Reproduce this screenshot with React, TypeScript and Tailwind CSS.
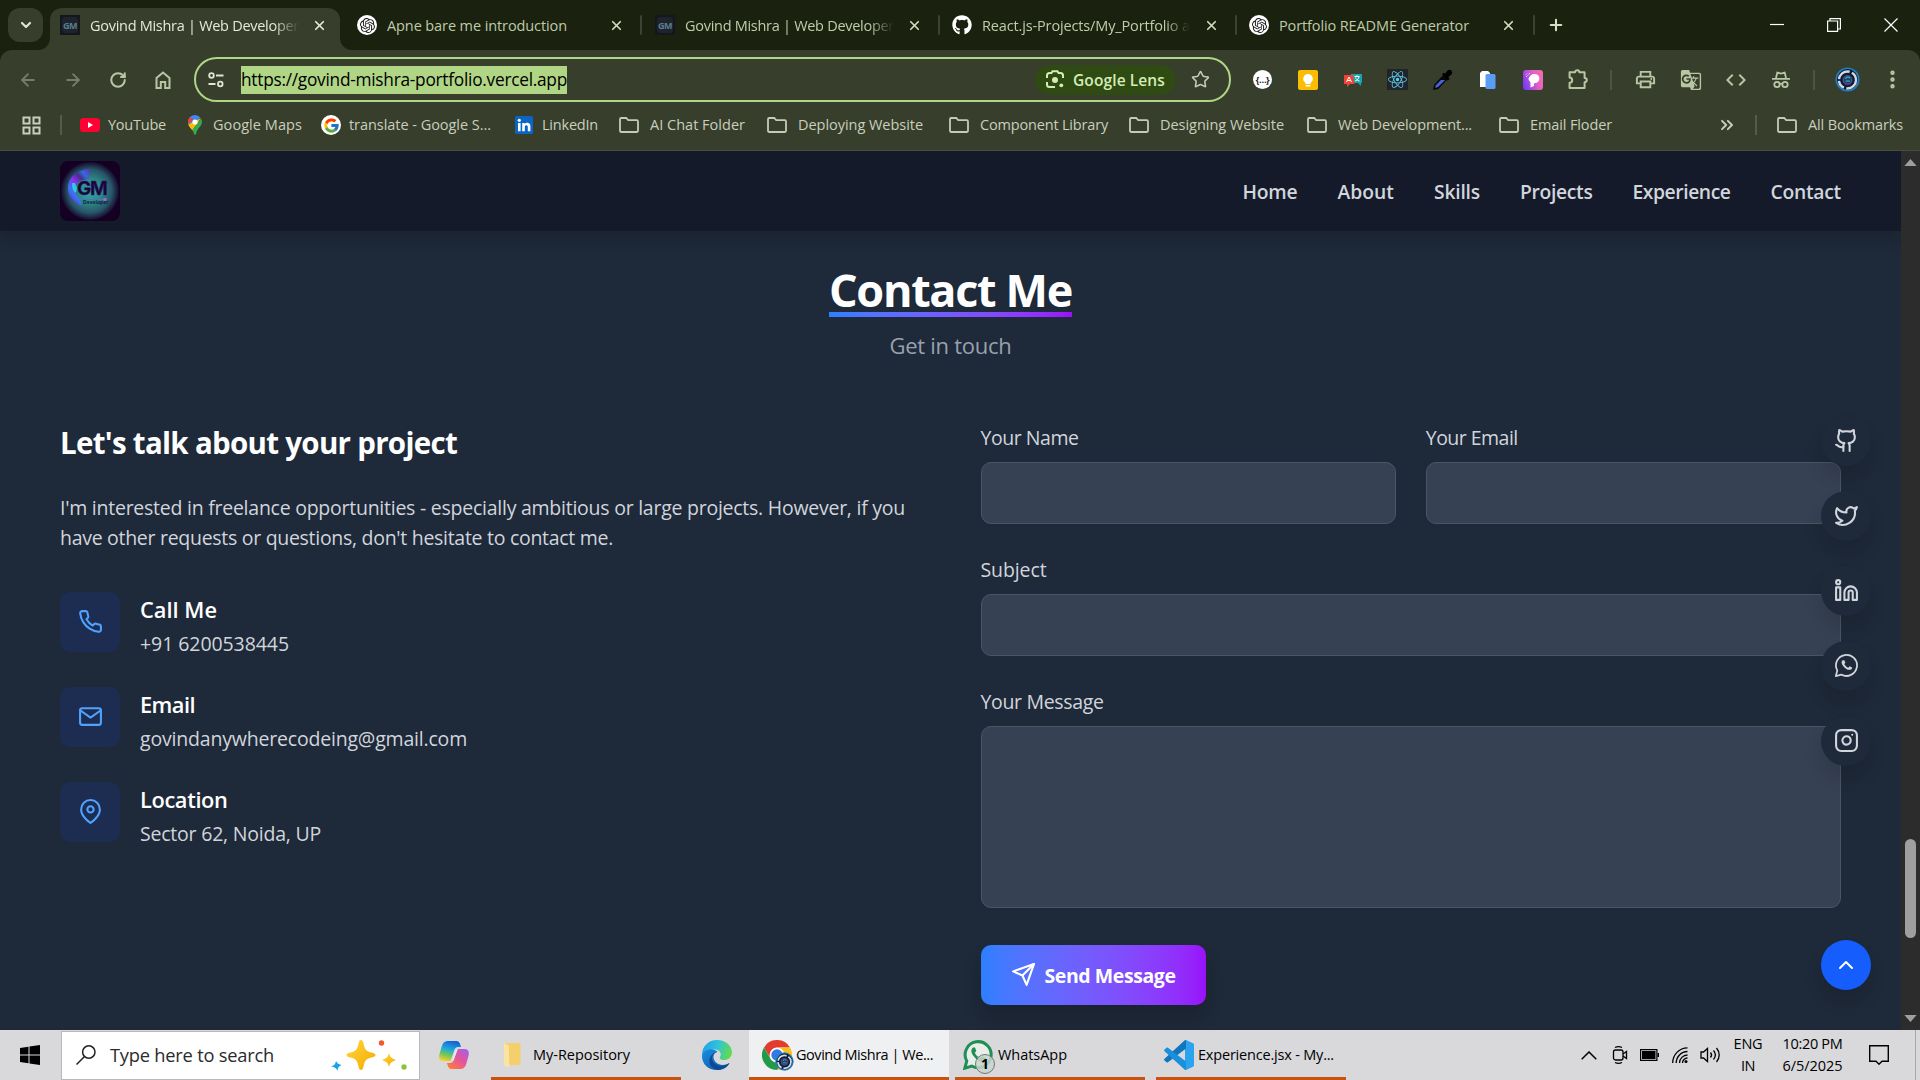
import { useLayoutEffect, useRef, type ReactNode } from 'react';
import {
  ArrowLeft, ArrowRight, RotateCw, Star, ChevronUp, ChevronDown, ChevronsRight, X, Plus,
  Github, Twitter, Linkedin, Instagram, EllipsisVertical,
} from 'lucide-react';
import { FiMail, FiMapPin, FiPhone, FiSend } from 'react-icons/fi';
import { FaGithub, FaReact } from 'react-icons/fa';
import { FcGoogle } from 'react-icons/fc';
import { SiOpenai } from 'react-icons/si';
import { MdOutlinePrint, MdGTranslate, MdCode } from 'react-icons/md';

/* Single line of text whose tracking is adjusted to fill the given width. */
function Fit({ w, className = '', children }: { w: number; className?: string; children: string }) {
  const ref = useRef<HTMLSpanElement>(null);
  useLayoutEffect(() => {
    const el = ref.current;
    if (!el) return;
    el.style.letterSpacing = '0px';
    const natural = el.getBoundingClientRect().width;
    el.style.letterSpacing = `${(w - natural) / children.length}px`;
  }, [w, children]);
  return <span ref={ref} className={`inline-block whitespace-pre ${className}`}>{children}</span>;
}

/* ---------- small drawings ---------- */

function GmFavicon() {
  return (
    <span className="flex size-5 shrink-0 items-center justify-center bg-[#14171c]">
      <span className="flex h-4 w-4 items-center justify-center rounded-[3px] bg-[#1d242b] text-[9px] font-bold leading-none tracking-[-0.5px] text-[#5d7d92]">GM</span>
    </span>
  );
}

function OpenAiFavicon() {
  return (
    <span className="flex size-5 shrink-0 items-center justify-center rounded-full bg-white">
      <SiOpenai className="size-[15px] text-[#1b1b1b]" />
    </span>
  );
}

function GithubFavicon() {
  return <FaGithub className="size-5 shrink-0 text-white" />;
}

function Folder() {
  return (
    <svg viewBox="0 0 20 16" className="h-4 w-5 shrink-0" fill="none" stroke="#c6cbb8" strokeWidth="1.8">
      <path d="M1 2.2C1 1.5 1.5 1 2.2 1h5l2 2.2h8.6c.7 0 1.2.5 1.2 1.200v9.400c0 .7-.5 1.200-1.200 1.200H2.200C1.500 15 1 14.500 1 13.800z" />
    </svg>
  );
}

function YoutubeIcon() {
  return (
    <svg viewBox="0 0 20 14" className="h-[14px] w-5 shrink-0">
      <rect width="20" height="14" rx="3.500" fill="#ff0033" />
      <path d="M8 4l5 3-5 3z" fill="#fff" />
    </svg>
  );
}

function MapsIcon() {
  return (
    <svg viewBox="0 0 20 20" className="size-5 shrink-0">
      <path d="M10 0a7 7 0 0 0-7 7c0 2 .7 3.500 2 5.200L15.400 2.600A7 7 0 0 0 10 0z" fill="#4285f4" />
      <path d="M4.600 2.600A7 7 0 0 0 3 7c0 .9.200 1.700.4 2.500l5-5.900z" fill="#ea4335" />
      <path d="M3.300 9.400c.9 2.600 2.800 4 4 6l8.600-12.100L12 5z" fill="#fbbc04" />
      <path d="M16.100 3.500C18 7.500 16.500 10 14 12.800c-1.600 1.900-2.400 3.600-2.800 5.600-.3 1.800-2.100 1.800-2.400 0-.3-1.500-.8-2.400-1.500-3.500z" fill="#34a853" />
      <circle cx="10" cy="7" r="2.600" fill="#fff" />
    </svg>
  );
}

function GoogleIcon() {
  return (
    <span className="flex size-5 shrink-0 items-center justify-center rounded-full bg-white">
      <FcGoogle className="size-[17px]" />
    </span>
  );
}

function LinkedinBadge() {
  return (
    <svg viewBox="0 0 20 20" className="size-5 shrink-0">
      <rect x="1" y="1" width="18" height="18" rx="1.500" fill="#0a66c2" />
      <circle cx="5.300" cy="5.300" r="1.600" fill="#fff" />
      <path d="M4 8h2.600v8.300H4zM8.200 8h2.500v1.200c.9-2 5.700-2.200 5.700 1.900v5.200h-2.600v-4.500c0-2.300-3-2.100-3 0v4.500H8.200z" fill="#fff" />
    </svg>
  );
}

function HomeIcon() {
  return (
    <svg viewBox="0 0 20 20" className="size-5" fill="none" stroke="#b9c6a5" strokeWidth="2">
      <path d="M3.500 8L10 2.500 16.500 8v10h-4.300v-6H7.800v6H3.500z" />
    </svg>
  );
}

function TuneIcon() {
  return (
    <svg viewBox="0 0 18 18" className="size-[18px]" fill="none" stroke="#dfe5d2" strokeWidth="1.800">
      <circle cx="4.500" cy="4.500" r="2.300" />
      <path d="M9 4.500h7.500M1.500 13h7" />
      <circle cx="13.300" cy="13" r="2.300" />
    </svg>
  );
}

function LensIcon() {
  return (
    <svg viewBox="0 0 18 19" className="h-[19px] w-[18px]" fill="none" stroke="#d3edb4" strokeWidth="2">
      <path d="M1 8V5.500C1 4 2 3 3.500 3h2l1-1.700h5L12.500 3h2C16 3 17 4 17 5.500V8M1 12v2.500C1 16 2 17 3.500 17H9" />
      <circle cx="9" cy="10" r="3" fill="#d3edb4" stroke="none" />
      <circle cx="15.300" cy="15.300" r="1.900" fill="#d3edb4" stroke="none" />
    </svg>
  );
}

function BracesIcon() {
  return (
    <span className="flex size-[19px] items-center justify-center rounded-full bg-white text-[9px] font-bold leading-none tracking-[-0.500px] text-[#222]">
      {'{…}'}
    </span>
  );
}

function KeepIcon() {
  return (
    <svg viewBox="0 0 20 20" className="size-5">
      <rect width="20" height="20" rx="2" fill="#fbbc04" />
      <path d="M10 4a4.800 4.800 0 0 0-2.600 8.800V14h5.200v-1.200A4.800 4.800 0 0 0 10 4z" fill="#fff" />
      <rect x="7.600" y="14.900" width="4.800" height="1.600" fill="#fff" />
    </svg>
  );
}

function TranslateBubbles() {
  return (
    <svg viewBox="0 0 20 20" className="size-5">
      <path d="M8 4h11v9h-1v3l-3-3H9z" fill="#1aa3ad" />
      <path d="M1 5h9l1.500 9H7l-3 3v-3H1z" fill="#ef4337" />
      <path d="M3.500 12L6 7l2.500 5M4.500 10.500h3M11.500 6.500h5M14 5.300v1.200M16 7c-.5 2-2 3.500-4 4M12.500 7.500c.5 1.500 2 3 4 3.500" fill="none" stroke="#fff" strokeWidth="1" />
    </svg>
  );
}

function ReactBadge() {
  return (
    <span className="flex size-[21px] items-center justify-center bg-[#20232a]">
      <FaReact className="size-[19px] text-[#5cc8e4]" />
    </span>
  );
}

function DropperIcon() {
  return (
    <svg viewBox="0 0 20 20" className="size-[21px]">
      <path d="M1 20l1-5L10.500 6l4 4L6 19z" fill="#07070c" />
      <path d="M3 18l.7-2.500 4.800-5h4L5.800 17.200z" fill="#4a63d8" />
      <path d="M9.500 5l2-1.500 1 1L15 1.300c2.500-2 5.500 1.200 3.700 3.700L15.500 7.800l1.200 1.500-1.700 1.800z" fill="#000" />
    </svg>
  );
}

function PagesIcon() {
  return (
    <svg viewBox="0 0 20 20" className="size-5">
      <path d="M2 3l2-2h6l2 2v14H2z" fill="#fff" />
      <rect x="7.500" y="4" width="10" height="15" rx="1.500" fill="#5a9df5" />
    </svg>
  );
}

function PurpleIcon() {
  return (
    <svg viewBox="0 0 20 20" className="size-5">
      <defs>
        <linearGradient id="pi" x1="0" y1="0.6" x2="1" y2="0.2">
          <stop offset="0" stopColor="#7a3cf5" /><stop offset=".6" stopColor="#e65fc5" /><stop offset="1" stopColor="#f070a8" />
        </linearGradient>
      </defs>
      <rect width="20" height="20" rx="3" fill="url(#pi)" />
      <path d="M7.500 17.500V12.500L5.500 9.500C6 6 8.500 4 11.500 4c5.500 0 6.500 6.500 2.500 8.500-1.300.7-2.300.6-3 .8v2.700z" fill="#fff" />
      <path d="M3 7l4-4M3 4.500L4.500 3" stroke="#fff" strokeWidth="1" strokeDasharray="1.200 1" />
    </svg>
  );
}

function PuzzleIcon() {
  return (
    <svg viewBox="0 0 20 20" className="ml-[2px] size-[21px]" fill="none" stroke="#b9c6a5" strokeWidth="1.900" strokeLinejoin="round">
      <path d="M1.500 3.200h5.200C6.700.6 10.800.6 10.800 3.200h5v5.300c2.800 0 2.800 4 0 4v5.700H1.500v-5c3.300-.3 3.300-4.900 0-5.200z" />
    </svg>
  );
}

function IncognitoIcon() {
  return (
    <svg viewBox="0 0 20 20" className="size-5" fill="none" stroke="#b9c6a5" strokeWidth="1.800">
      <path d="M5 8l1.300-5.500L10 3.500l3.700-1L15 8M1 8.800h18" />
      <circle cx="6" cy="14.500" r="2.700" /><circle cx="14" cy="14.500" r="2.700" />
      <path d="M8.500 14c1-.6 2-.6 3 0" />
    </svg>
  );
}

function AvatarIcon({ className }: { className: string }) {
  return (
    <svg viewBox="0 0 26 26" className={className}>
      <circle cx="13" cy="13" r="12.500" fill="#1f7fc4" />
      <circle cx="13" cy="13" r="10.800" fill="#101a2c" />
      <circle cx="13" cy="13.500" r="8.800" fill="none" stroke="#cdd9e3" strokeWidth="2.600" strokeDasharray="15 2.500 9 2" />
      <circle cx="13" cy="13.500" r="7.300" fill="#141c33" />
      <circle cx="13" cy="13.500" r="5.400" fill="#253b66" />
      <circle cx="13" cy="13.500" r="4.200" fill="none" stroke="#5a4fb0" strokeWidth="1" />
      <path d="M11 12.500a2.500 2.500 0 0 1 4.500-.8M11 14.800h4.500" stroke="#2fb3a8" strokeWidth="1.300" fill="none" />
    </svg>
  );
}

function WhatsappLine() {
  return (
    <svg viewBox="0 0 24 24" className="size-[25px]" fill="none" stroke="currentColor" strokeWidth="1.700" strokeLinejoin="round">
      <path d="M1.700 22.200l1.500-5.300a10.100 10.100 0 1 1 3.800 3.800z" />
      <path d="M8.300 6.900c-1.500 1-1.300 3 .3 5.300 2 2.900 4.800 4.400 7 3.900 1.300-.3 1.900-1.300 1.700-2.200l-2.300-1.100-1.200 1.400c-1.800-.8-3.100-2-3.900-3.700l1-1.200-1-2.400z" fill="currentColor" stroke="none" />
    </svg>
  );
}

function SiteLogo() {
  return (
    <div className="relative size-[60px] overflow-hidden rounded-lg bg-[#150024]">
      <svg viewBox="0 0 60 60" className="size-[60px]">
        <defs>
          <radialGradient id="glow" cx="0.5" cy="0.5" r="0.5">
            <stop offset="0" stopColor="#2fb0a4" /><stop offset=".4" stopColor="#2d8a88" />
            <stop offset=".75" stopColor="#28566a" /><stop offset="1" stopColor="#150a2c" />
          </radialGradient>
          <linearGradient id="arc" x1="1" y1="0" x2="0.3" y2="1">
            <stop offset="0" stopColor="#7b1fe0" /><stop offset=".2" stopColor="#2f6fd8" /><stop offset=".35" stopColor="#4b2d8c" />
            <stop offset=".55" stopColor="#8b2ff0" /><stop offset=".8" stopColor="#2f7cf0" /><stop offset="1" stopColor="#7a1fe0" />
          </linearGradient>
        </defs>
        <circle cx="30" cy="30" r="29" fill="url(#glow)" />
        <path d="M29 8C14 10 8 18 8 27c0 9 6 15 14 17.500l-2-6c-5-6-6-11-4-15 2-3 6-5 13-5.500z" fill="url(#arc)" />
        <path d="M12 22c0 6 1 8 4 10l1-5-2-5z" fill="#35c3e8" />
        <path d="M20 38.500h25" stroke="#4f6fc8" strokeWidth="1" /><circle cx="45" cy="38.500" r="1.800" fill="#8a6fd0" />
      </svg>
      <span className="absolute left-[17px] top-[18px] font-[Inter] text-[19px] font-bold leading-[20px] tracking-[-1.200px] text-[#14082f] [-webkit-text-stroke:0.500px_#3a1280]">GM</span>
      <span className="absolute left-[23px] top-[39px] text-[5px] font-bold leading-none text-[#14203c]">Developer</span>
    </div>
  );
}

/* ---------- browser frame ---------- */

const Sep = () => <div className="h-5 w-[2px] shrink-0 rounded bg-[#3b442f]" />;

function TabBody({ icon, title, w, fade, active }: {
  icon: ReactNode; title: string; w: number; fade?: boolean; active?: boolean;
}) {
  return (
    <div className="flex h-full min-w-0 flex-1 items-center">
      {icon}
      <div className={`ml-[10px] w-[222px] shrink-0 ${active ? 'text-[#e3e9d8]' : 'text-[#bfcba9]'}`}>
        <Fit w={w} className={`text-[14.500px] leading-5 ${fade ? 'mask-r-from-88%' : ''}`}>{title}</Fit>
      </div>
      <X className={`size-[15px] shrink-0 ${active ? 'text-[#e3e9d8]' : 'text-[#cfd9bd]'}`} strokeWidth={2.800} />
    </div>
  );
}

function TabStrip() {
  return (
    <div className="flex h-[50px] bg-[#1a210f]">
      <div className="mt-2 ml-2 flex h-[34px] w-[35px] items-center justify-center rounded-xl bg-[#373e2b]">
        <ChevronDown className="size-4 text-[#dfe6d0]" strokeWidth={3.200} />
      </div>
      <div className="relative mt-2 ml-[7px] flex h-[42px] w-[290px] rounded-t-xl bg-[#373e2b] pb-2 pl-[10px]">
        <svg viewBox="0 0 12 12" className="absolute bottom-0 -left-3 size-3"><path d="M12 0v12H0A12 12 0 0 0 12 0z" fill="#373e2b" /></svg>
        <svg viewBox="0 0 12 12" className="absolute -right-3 bottom-0 size-3"><path d="M0 0v12h12A12 12 0 0 1 0 0z" fill="#373e2b" /></svg>
        <TabBody icon={<GmFavicon />} title="Govind Mishra | Web Developer" w={209} fade active />
      </div>
      <div className="mt-2 flex h-[34px] items-center">
        <div className="flex h-full w-[300px] items-center pl-[17px]">
          <TabBody icon={<OpenAiFavicon />} title="Apne bare me introduction" w={180} />
        </div>
        <Sep />
        <div className="flex h-full w-[296px] items-center pl-[13px]">
          <TabBody icon={<GmFavicon />} title="Govind Mishra | Web Developer" w={209} fade />
        </div>
        <Sep />
        <div className="flex h-full w-[295px] items-center pl-3">
          <TabBody icon={<GithubFavicon />} title="React.js-Projects/My_Portfolio a" w={208} fade />
        </div>
        <Sep />
        <div className="flex h-full w-[296px] items-center pl-3">
          <TabBody icon={<OpenAiFavicon />} title="Portfolio README Generator" w={190} />
        </div>
        <Sep />
        <Plus className="ml-3 size-[18px] text-[#d5dec4]" strokeWidth={2.800} />
      </div>
      <div className="ml-auto flex h-[49px] items-center pr-[22px] text-white">
        <svg viewBox="0 0 14 14" className="mr-[43px] size-[14px]" stroke="currentColor" fill="none"><path d="M0 6.500h14" strokeWidth="1.200" /></svg>
        <svg viewBox="0 0 14 14" className="mr-[43px] size-[14px]" stroke="currentColor" fill="none" strokeWidth="1.200"><path d="M.6 3h10v10.400H.6zM3 3V.6h10.400v10.400H10.600" /></svg>
        <svg viewBox="0 0 14 14" className="size-[14px]" stroke="currentColor" fill="none" strokeWidth="1.200"><path d="M.5.5l13 13M13.500.5l-13 13" /></svg>
      </div>
    </div>
  );
}

function Cell({ children }: { children: ReactNode }) {
  return <div className="flex w-[45px] shrink-0 items-center justify-center">{children}</div>;
}

function Toolbar() {
  return (
    <div className="bg-[#1a210f]">
      <div className="flex h-[59px] items-center rounded-t-xl bg-[#373e2b] pl-[5px] text-[#b9c6a5]">
        <Cell><ArrowLeft className="size-5 text-[#767e69]" strokeWidth={2.200} /></Cell>
        <Cell><ArrowRight className="size-5 text-[#767e69]" strokeWidth={2.200} /></Cell>
        <Cell><RotateCw className="size-[18px]" strokeWidth={2.700} /></Cell>
        <Cell><HomeIcon /></Cell>
        <div className="ml-[9px] flex h-[45px] w-[1037px] shrink-0 items-center rounded-full border-[2.500px] border-[#afd585] pl-[11px]">
          <TuneIcon />
          <div className="ml-4 flex h-7 w-[326px] items-center bg-[#afd585] text-black">
            <Fit w={326} className="text-[17.300px] leading-7">https://govind-mishra-portfolio.vercel.app</Fit>
          </div>
          <div className="ml-auto flex h-[30px] w-[141px] items-center gap-[9px] rounded-full bg-[#2f4a13] pl-[11px] text-[#d3edb4]">
            <LensIcon />
            <Fit w={92} className="pt-[1px] text-[15.500px] font-semibold leading-6">Google Lens</Fit>
          </div>
          <Star className="mr-[19px] ml-[15px] size-[19px] text-[#c4cbb6]" strokeWidth={2} />
        </div>
        <div className="ml-[9px] flex items-center">
          <Cell><BracesIcon /></Cell>
          <Cell><KeepIcon /></Cell>
          <Cell><TranslateBubbles /></Cell>
          <Cell><ReactBadge /></Cell>
          <Cell><DropperIcon /></Cell>
          <Cell><PagesIcon /></Cell>
          <Cell><PurpleIcon /></Cell>
          <Cell><PuzzleIcon /></Cell>
          <div className="mr-[11px] ml-[10px] h-5 w-[2px] bg-[#4d5541]" />
          <Cell><MdOutlinePrint className="size-[23px]" /></Cell>
          <Cell><MdGTranslate className="size-[22px]" /></Cell>
          <Cell><MdCode className="size-6" /></Cell>
          <Cell><IncognitoIcon /></Cell>
          <div className="mr-[10px] ml-[10px] h-5 w-[2px] bg-[#4d5541]" />
          <Cell><AvatarIcon className="size-[25px]" /></Cell>
          <Cell><EllipsisVertical className="size-[23px]" strokeWidth={2.600} /></Cell>
        </div>
      </div>
    </div>
  );
}

function Bookmark({ icon, label, w, box }: { icon: ReactNode; label: string; w: number; box: string }) {
  return (
    <div className={`flex shrink-0 items-center text-[#c9cfbd] ${box}`}>
      {icon}
      <Fit w={w} className="text-[14.500px] leading-5">{label}</Fit>
    </div>
  );
}

function BookmarksBar() {
  return (
    <div className="flex h-[42px] items-start border-b border-[#474c3c] bg-[#373e2b] pt-[6px]">
      <div className="flex h-5 w-full items-center">
        <svg viewBox="0 0 19 19" className="ml-[22px] size-[19px]" fill="none" stroke="#c9cfbd" strokeWidth="2">
          <path d="M1.500 1.500h6v6h-6zM11.500 1.500h6v6h-6zM1.500 11.500h6v6h-6zM11.500 11.500h6v6h-6z" />
        </svg>
        <div className="mr-[18px] ml-[19px] h-5 w-[2px] bg-[#545c47]" />
        <Bookmark icon={<YoutubeIcon />} label="YouTube" w={58} box="w-[105px] gap-[8px]" />
        <Bookmark icon={<MapsIcon />} label="Google Maps" w={89} box="w-[136px] gap-[8px]" />
        <Bookmark icon={<GoogleIcon />} label="translate - Google S..." w={142} box="w-[193px] gap-2" />
        <Bookmark icon={<LinkedinBadge />} label="LinkedIn" w={56} box="w-[105px] gap-[8px]" />
        <Bookmark icon={<Folder />} label="AI Chat Folder" w={95} box="w-[148px] gap-[11px]" />
        <Bookmark icon={<Folder />} label="Deploying Website" w={125} box="w-[182px] gap-[11px]" />
        <Bookmark icon={<Folder />} label="Component Library" w={128} box="w-[180px] gap-[11px]" />
        <Bookmark icon={<Folder />} label="Designing Website" w={124} box="w-[178px] gap-[11px]" />
        <Bookmark icon={<Folder />} label="Web Development..." w={134} box="w-[192px] gap-[11px]" />
        <Bookmark icon={<Folder />} label="Email Floder" w={82} box="w-[218px] gap-[11px]" />
        <ChevronsRight className="size-5 text-[#c9cfbd]" strokeWidth={2.300} />
        <div className="mr-5 ml-[18px] h-5 w-[2px] bg-[#545c47]" />
        <Bookmark icon={<Folder />} label="All Bookmarks" w={95} box="gap-[11px]" />
      </div>
    </div>
  );
}

/* ---------- web page ---------- */

const NAV = [
  { label: 'Home', w: 55 }, { label: 'About', w: 56.500 }, { label: 'Skills', w: 46 },
  { label: 'Projects', w: 72.500 }, { label: 'Experience', w: 98 }, { label: 'Contact', w: 70.500 },
];

function Navbar() {
  return (
    <header className="flex h-20 items-center justify-between bg-[#141a2a] px-[60px] shadow-[0_8px_14px_rgba(0,0,0,0.14)]">
      <SiteLogo />
      <nav className="flex gap-10 pt-[2px] text-[19.300px] font-semibold leading-[30px] text-[#d1d5dc]">
        {NAV.map((n) => <Fit key={n.label} w={n.w}>{n.label}</Fit>)}
      </nav>
    </header>
  );
}

const CONTACTS = [
  { icon: <FiPhone className="size-[25px]" />, title: 'Call Me', tw: 77, text: '+91 6200538445', w: 149 },
  { icon: <FiMail className="size-[25px]" />, title: 'Email', tw: 55, text: 'govindanywherecodeing@gmail.com', w: 327 },
  { icon: <FiMapPin className="size-[25px]" />, title: 'Location', tw: 87.500, text: 'Sector 62, Noida, UP', w: 181 },
];

function Field({ label, w, box }: { label: string; w: number; box: string }) {
  return (
    <label className="flex flex-1 flex-col gap-[10px] text-[19.500px] leading-[30px] text-[#d1d5dc]">
      <span className="flex h-[30px] pt-[1px]"><Fit w={w}>{label}</Fit></span>
      <span className={`block rounded-[10px] border border-[#4a5565] bg-[#364153] ${box}`} />
    </label>
  );
}

function ContactSection() {
  return (
    <section className="px-[60px] pt-[33px]">
      <div className="flex flex-col items-center">
        <h2 className="relative flex h-[50px] items-center text-[45px] font-bold text-white">
          <Fit w={243} className="pt-[1px] leading-[50px]">Contact Me</Fit>
          <span className="absolute top-12 left-0 h-[5px] w-full bg-gradient-to-r from-[#2b7fff] to-[#9810fa]" />
        </h2>
        <p className="mt-4 text-[22px] leading-[30px] text-[#99a1af]"><Fit w={122}>Get in touch</Fit></p>
      </div>
      <div className="mt-[62px] grid grid-cols-2 gap-[60px]">
        <div>
          <h3 className="h-10 pt-[1px] text-[29.500px] font-bold leading-10 text-white"><Fit w={397}>Let's talk about your project</Fit></h3>
          <div className="mt-[31px] flex flex-col items-start text-[19.500px] leading-[30px] text-[#d1d5dc]">
            <Fit w={845}>I'm interested in freelance opportunities - especially ambitious or large projects. However, if you</Fit>
            <Fit w={553}>have other requests or questions, don't hesitate to contact me.</Fit>
          </div>
          <div className="mt-[39px] flex flex-col gap-[35px]">
            {CONTACTS.map((c) => (
              <div key={c.title} className="flex h-[60px] gap-5">
                <div className="flex size-[60px] items-center justify-center rounded-[10px] bg-[#1c2d51] pb-[1px] text-[#51a2ff]">{c.icon}</div>
                <div className="flex flex-col items-start pt-[1px] leading-[33px]">
                  <Fit w={c.tw} className="text-[21.800px] font-semibold text-white">{c.title}</Fit>
                  <Fit w={c.w} className="pt-[1px] text-[19.500px] text-[#d1d5dc]">{c.text}</Fit>
                </div>
              </div>
            ))}
          </div>
        </div>
        <form className="flex flex-col gap-[30px]">
          <div className="flex gap-[30px]">
            <Field label="Your Name" w={98} box="h-[62px]" />
            <Field label="Your Email" w={92} box="h-[62px]" />
          </div>
          <Field label="Subject" w={66} box="h-[62px]" />
          <Field label="Your Message" w={123} box="h-[182px]" />
          <button type="button" className="mt-[7px] flex h-[60px] w-[225px] items-center rounded-[10px] bg-gradient-to-r from-[#2b7fff] to-[#9810fa] pl-[30px] text-white shadow-[0_12px_18px_rgba(0,0,0,0.16)]">
            <FiSend className="mb-[1px] size-[25px]" />
            <Fit w={131} className="ml-[9px] pt-[2px] text-[19.500px] font-bold leading-[30px]">Send Message</Fit>
          </button>
        </form>
      </div>
    </section>
  );
}

function FloatingButtons() {
  const circle = 'flex size-[50px] items-center justify-center rounded-full shadow-[0_12px_18px_rgba(0,0,0,0.12)]';
  return (
    <>
      <div className="absolute top-[265px] right-[30px] flex flex-col gap-[25px] text-[#d1d5dc]">
        {[
          <Github className="size-[25px]" />, <Twitter className="size-[25px]" />, <Linkedin className="size-[25px]" />,
          <WhatsappLine />, <Instagram className="size-[25px]" />,
        ].map((icon, i) => <div key={i} className={`${circle} bg-[#1e2939] pb-[2px]`}>{icon}</div>)}
      </div>
      <div className={`absolute top-[789px] right-[30px] ${circle} bg-[#155dfc] text-white`}>
        <ChevronUp className="size-6" strokeWidth={2} />
      </div>
    </>
  );
}

function Scrollbar() {
  return (
    <div className="flex w-[19px] flex-col items-center bg-[#2c2c2c]">
      <svg viewBox="0 0 14 8" className="mt-2 h-[7px] w-[13px]"><path d="M7 0l7 8H0z" fill="#9f9f9f" /></svg>
      <div className="mt-[673px] h-[99px] w-[11px] rounded-full bg-[#9f9f9f]" />
      <svg viewBox="0 0 14 8" className="mt-auto mb-2 h-[7px] w-[13px]"><path d="M7 8l7-8H0z" fill="#9f9f9f" /></svg>
    </div>
  );
}

/* ---------- taskbar ---------- */

function Sparkles() {
  return (
    <svg viewBox="0 0 78 32" className="h-8 w-[78px]">
      <defs>
        <linearGradient id="sp" x1="0" y1="0" x2="1" y2="1"><stop offset="0" stopColor="#ffd83d" /><stop offset="1" stopColor="#f5a800" /></linearGradient>
      </defs>
      <path d="M30 1c1.500 0 2 1 2.700 4.500 1.300 5.500 2.500 6.500 7.800 8 3 .9 4 1.300 4 2.500s-1 1.700-4 2.500c-5.300 1.500-6.500 2.500-7.800 8C32 30 31.500 31 30 31s-2-1-2.700-4.500c-1.300-5.500-2.500-6.500-7.800-8-3-.8-4-1.300-4-2.500s1-1.600 4-2.500c5.300-1.500 6.500-2.500 7.800-8C28 2 28.500 1 30 1z" fill="url(#sp)" />
      <path d="M58 14c1 4 2 5 7 7-5 2-6 3-7 7-1-4-2-5-7-7 5-2 6-3 7-7z" fill="url(#sp)" />
      <path d="M5 22c1 2 2 3 5.500 4C8 27 6.500 29 6.500 32 5.500 29.500 4 28 0 27.500 3 27 4.500 25 5 22z" fill="#12a5ee" />
      <circle cx="50.500" cy="4" r="2.700" fill="#f1592a" /><circle cx="73" cy="28" r="2.700" fill="#8ac43f" />
    </svg>
  );
}

function CopilotIcon() {
  return (
    <svg viewBox="0 0 30 28" className="h-7 w-[30px]">
      <defs>
        <linearGradient id="c1" x1="0.6" y1="0" x2="0.3" y2="1"><stop offset="0" stopColor="#1560d8" /><stop offset=".4" stopColor="#1fa6e0" /><stop offset=".7" stopColor="#6fc65a" /><stop offset="1" stopColor="#f2d02a" /></linearGradient>
        <linearGradient id="c2" x1="1" y1="0" x2="0.2" y2="1"><stop offset="0" stopColor="#9b62f2" /><stop offset=".5" stopColor="#e3549e" /><stop offset="1" stopColor="#ff7a3c" /></linearGradient>
      </defs>
      <path d="M19 8h6.500c4 0 5 3 4 7l-2 7c-1 4-3 6-6 6h-8.500c-3 0-4-2-5-6h3c2 0 3-1 4-4z" fill="url(#c2)" />
      <path d="M11.500 20H4.500c-4 0-5-3-4-7l2-7c1-4 3-6 6-6H17c3 0 4 2 5 6h-3c-2 0-3 1-4 4z" fill="url(#c1)" />
      <path d="M16.500 8.500h1.800l-3.800 11h-1.800z" fill="#e9e6ea" />
    </svg>
  );
}

function FolderYellow() {
  return (
    <svg viewBox="0 0 18 26" className="h-[26px] w-[18px]">
      <path d="M1 1h15.500v22H6z" fill="#f5cf6b" /><path d="M0 1l5 3v22l-5-3z" fill="#fbe3a0" />
    </svg>
  );
}

function EdgeIcon() {
  return (
    <svg viewBox="0 0 30 30" className="size-[30px]">
      <defs>
        <linearGradient id="e1" x1="0" y1="0.2" x2="1" y2="0.4"><stop offset="0" stopColor="#1f9fe0" /><stop offset=".5" stopColor="#2fc2df" /><stop offset="1" stopColor="#62dc4c" /></linearGradient>
        <linearGradient id="e2" x1="0" y1="0" x2="1" y2="1"><stop offset="0" stopColor="#1b8fe2" /><stop offset="1" stopColor="#0c4fa0" /></linearGradient>
      </defs>
      <path d="M0 15C0 6 7 0 15 0c9 0 15 6 15 12.500 0 5-4 7.500-8 7.500-3.500 0-5-1.500-4-3 2-3 0-7.500-5-7.500C6 9.500 1 13 0 17z" fill="url(#e1)" />
      <path d="M0 16c1-5 6-7.500 11-6.500 2 .4 3.500 1.200 4.500 2.500-5 1-5 7-1.500 10.500 3.500 3.300 9.500 3 13.500.5C25 27.500 20 30 15 30 6 30 0 24 0 16z" fill="url(#e2)" />
      <path d="M15 12c-6 2-6 8-2.500 11.500S22 27 27.500 23c-2 4-6 7-12.500 7C9 28 6 23 8 18c1-3 4-5.500 7-6z" fill="#0d4a94" />
    </svg>
  );
}

function ChromeIcon() {
  return (
    <div className="relative size-[31px]">
      <svg viewBox="0 0 30 30" className="size-[30px]">
        <path d="M2 7.500A15 15 0 0 1 28 7.500H15a7.500 7.500 0 0 0-6.500 11z" fill="#e33b2e" />
        <path d="M28 7.500A15 15 0 0 1 15 30l6.500-11.300A7.500 7.500 0 0 0 15 7.500z" fill="#fbc116" />
        <path d="M2 7.500l6.500 11.200a7.500 7.500 0 0 0 13 0L15 30A15 15 0 0 1 2 7.500z" fill="#229a48" />
        <circle cx="15" cy="15" r="7.200" fill="#fff" /><circle cx="15" cy="15" r="5.700" fill="#3478e6" />
      </svg>
      <AvatarIcon className="absolute top-3 left-[13px] size-[19px]" />
    </div>
  );
}

function WhatsappTask() {
  return (
    <div className="relative size-[31px]">
      <svg viewBox="0 0 30 30" className="size-[30px]">
        <path d="M1.800 28.200l2-7.200a13 13 0 1 1 5 5z" fill="#e8efe9" stroke="#1f8f55" strokeWidth="3" />
        <path d="M10 7.500c-2.500 2-2 5 .5 8.500 3 4 6.500 6.500 10 5.500 2-.7 2.500-2.500 2-3.800l-3.500-1.500-1.700 1.800c-2.500-1-4.300-2.700-5.500-5.200l1.500-1.700L12 7.500z" fill="#1f8f55" />
      </svg>
      <span className="absolute top-[14px] left-3 flex size-5 items-center justify-center rounded-full border border-[#6f7a74] bg-[#c9d5ce]/85 text-[14px] font-bold leading-none text-black">1</span>
    </div>
  );
}

function VscodeIcon() {
  return (
    <svg viewBox="0 0 30 30" className="size-[30px]">
      <path d="M22 0l7 3.300c.7.300 1 .8 1 1.500v20.400c0 .7-.3 1.200-1 1.500L22 30l-1-8V8z" fill="#2ba3ee" />
      <path d="M22 0v8.500L4 22.300c-.6.400-1 .4-1.500 0L.5 20.500c-.6-.5-.6-1.200 0-1.700L20.500.6C21 .1 21.500 0 22 0z" fill="#1176bb" />
      <path d="M22 30v-8.500L4 7.700c-.6-.4-1-.4-1.500 0L.5 9.500c-.6.5-.6 1.200 0 1.700l20 18.200c.5.500 1 .6 1.500.6z" fill="#1a8fdb" />
    </svg>
  );
}

function Task({ icon, label, w, box, gap }: { icon: ReactNode; label: string; w: number; box: string; gap: string }) {
  return (
    <div className={`flex h-[50px] shrink-0 items-center border-b-[3px] border-[#c8520f] pt-[3px] text-black ${box} ${gap}`}>
      {icon}
      <Fit w={w} className="text-[14.500px] leading-5">{label}</Fit>
    </div>
  );
}

function Taskbar() {
  return (
    <footer className="flex h-[50px] items-center bg-[#d9d9dc]">
      <svg viewBox="0 0 20 20" className="ml-5 size-5"><path d="M0 3l8.500-1.200v7.700H0zM9.500 1.600L20 0v9.500H9.500zM0 10.500h8.500v7.700L0 17zM9.500 10.500H20V20L9.500 18.400z" /></svg>
      <div className="ml-[21px] flex h-[49px] w-[359px] items-center border border-[#b9b9bc] bg-white pl-[14px]">
        <svg viewBox="0 0 20 20" className="size-5" fill="none" stroke="#222" strokeWidth="1.500"><circle cx="12.800" cy="7" r="6.200" /><path d="M8.500 11.500L.5 19.500" /></svg>
        <Fit w={164} className="ml-[14px] text-[18.300px] leading-6 text-[#2b2b2b]">Type here to search</Fit>
        <div className="mr-[10px] ml-auto"><Sparkles /></div>
      </div>
      <div className="mr-[22px] ml-[19px]"><CopilotIcon /></div>
      <Task icon={<FolderYellow />} label="My-Repository" w={97} box="w-[190px] pl-[13px]" gap="gap-[11px]" />
      <div className="mr-[17px] ml-[21px]"><EdgeIcon /></div>
      <Task icon={<ChromeIcon />} label="Govind Mishra | We..." w={137} box="w-[200px] bg-[#eff0f1] pl-[13px]" gap="gap-[3px]" />
      <Task icon={<WhatsappTask />} label="WhatsApp" w={69} box="ml-[6px] w-[190px] pl-2" gap="gap-[4px]" />
      <Task icon={<VscodeIcon />} label="Experience.jsx - My..." w={136} box="ml-[11px] w-[190px] pl-2" gap="gap-[4px]" />
      <div className="ml-auto flex h-full items-center text-black">
        <svg viewBox="0 0 16 9" className="mr-[15px] h-[9px] w-4" fill="none" stroke="currentColor" strokeWidth="1.500"><path d="M.7 8.300L8 1l7.300 7.300" /></svg>
        <svg viewBox="0 0 16 18" className="mr-3 h-[18px] w-4" fill="none" stroke="currentColor" strokeWidth="1.300">
          <rect x="1.500" y="4" width="9.500" height="10" rx="2" /><path d="M11 8l3.500-2.500v7L11 10M3 1.500c2-.9 5-.9 7 0M3 16.500c2 .9 5 .9 7 0" />
        </svg>
        <svg viewBox="0 0 19 12" className="mr-[13px] h-3 w-[19px]"><path d="M.6.6h16.300v10.800H.6z" fill="none" stroke="#000" strokeWidth="1.200" /><path d="M2 2h13.500v8H2zM17.500 4H19v4h-1.500z" /></svg>
        <svg viewBox="0 0 16 16" className="mr-3 size-4" fill="none" stroke="currentColor" strokeWidth="1.300">
          <path d="M.7 16A15 15 0 0 1 15.500.8M4.200 16A11.500 11.500 0 0 1 15.500 4.500M7.500 16a8 8 0 0 1 8-8M10.500 16a5 5 0 0 1 5-5" /><circle cx="14" cy="14.500" r="1.500" fill="#000" stroke="none" />
        </svg>
        <svg viewBox="0 0 21 18" className="mr-3 h-[18px] w-[21px]" fill="none" stroke="currentColor" strokeWidth="1.300">
          <path d="M1 6h2.500L7.500 2.500v13L3.500 12H1zM10.500 6.500c1.300 1.500 1.300 3.500 0 5M13.500 4.500c2.300 2.700 2.300 6.300 0 9M16.500 2c3.600 4.200 3.600 9.800 0 14" />
        </svg>
        <div className="flex w-[30px] flex-col items-center text-[14.500px] leading-[22px]"><Fit w={29}>ENG</Fit><Fit w={14}>IN</Fit></div>
        <div className="ml-[19px] flex w-[61px] flex-col items-center text-[14.500px] leading-[22px]"><Fit w={60}>10:20 PM</Fit><Fit w={60}>6/5/2025</Fit></div>
        <svg viewBox="0 0 20 20" className="mr-[26px] ml-[26px] size-5" fill="none" stroke="currentColor" strokeWidth="1.400"><path d="M.7.7h18.600v15.600H13L10 19.200l-3-2.900H.7z" /></svg>
        <div className="mr-1 h-full w-px bg-[#a8a8ab]" />
      </div>
    </footer>
  );
}

export default function App() {
  return (
    <div className="flex h-[1080px] w-[1920px] flex-col overflow-hidden bg-[#1e2939] font-['Open_Sans','Noto_Sans',sans-serif]">
      <TabStrip />
      <Toolbar />
      <BookmarksBar />
      <div className="flex h-[879px]">
        <main className="relative w-[1901px] shrink-0 overflow-hidden bg-[#1e2939]">
          <Navbar />
          <ContactSection />
          <FloatingButtons />
        </main>
        <Scrollbar />
      </div>
      <Taskbar />
    </div>
  );
}
